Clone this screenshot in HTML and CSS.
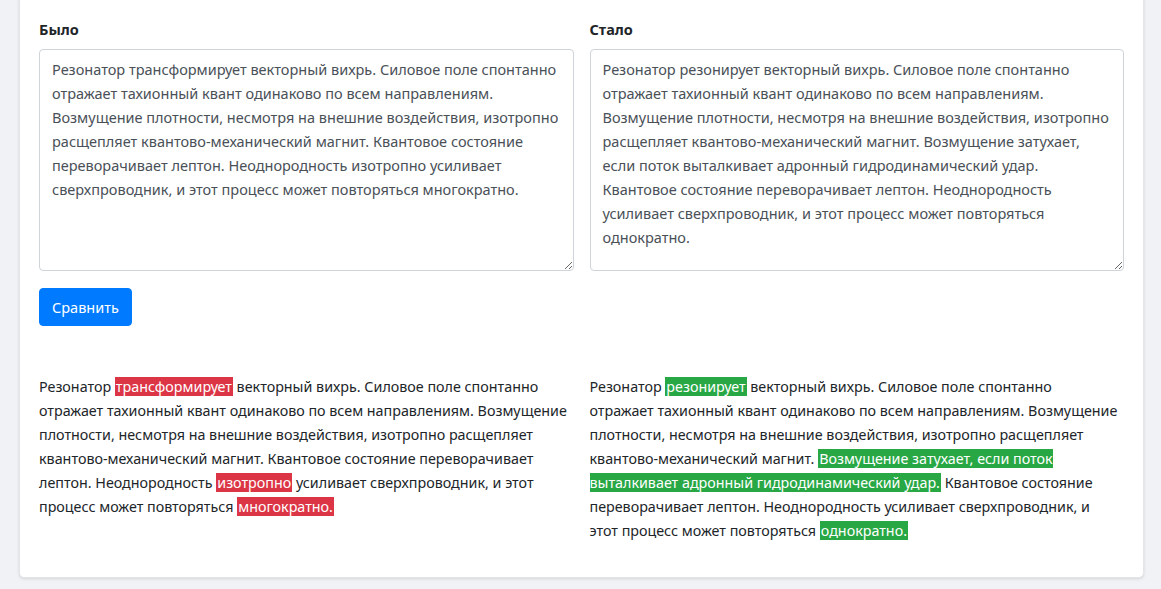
FILE: index.html
```html
<!DOCTYPE html>
<html lang="ru">
<head>
    <meta charset="UTF-8">
    <title>Сравнение текстов</title>
    <link rel="stylesheet" href="styles.css">
</head>
<body>
    <div class="card">
        <div class="editors">
            <div class="editor">
                <label class="editor-label" for="before">Было</label>
                <textarea id="before" class="editor-input">Резонатор трансформирует векторный вихрь. Силовое поле спонтанно отражает тахионный квант одинаково по всем направлениям. Возмущение плотности, несмотря на внешние воздействия, изотропно расщепляет квантово-механический магнит. Квантовое состояние переворачивает лептон. Неоднородность изотропно усиливает сверхпроводник, и этот процесс может повторяться многократно.</textarea>
            </div>
            <div class="editor">
                <label class="editor-label" for="after">Стало</label>
                <textarea id="after" class="editor-input">Резонатор резонирует векторный вихрь. Силовое поле спонтанно отражает тахионный квант одинаково по всем направлениям. Возмущение плотности, несмотря на внешние воздействия, изотропно расщепляет квантово-механический магнит. Возмущение затухает, если поток выталкивает адронный гидродинамический удар. Квантовое состояние переворачивает лептон. Неоднородность усиливает сверхпроводник, и этот процесс может повторяться однократно.</textarea>
            </div>
        </div>

        <button class="btn-compare">Сравнить</button>

        <div class="results">
            <p class="result">Резонатор <span class="removed">трансформирует</span> векторный вихрь. Силовое поле спонтанно отражает тахионный квант одинаково по всем направлениям. Возмущение плотности, несмотря на внешние воздействия, изотропно расщепляет квантово-механический магнит. Квантовое состояние переворачивает лептон. Неоднородность <span class="removed">изотропно</span> усиливает сверхпроводник, и этот процесс может повторяться <span class="removed">многократно.</span></p>
            <p class="result">Резонатор <span class="added">резонирует</span> векторный вихрь. Силовое поле спонтанно отражает тахионный квант одинаково по всем направлениям. Возмущение плотности, несмотря на внешние воздействия, изотропно расщепляет квантово-механический магнит. <span class="added">Возмущение затухает, если поток выталкивает адронный гидродинамический удар.</span> Квантовое состояние переворачивает лептон. Неоднородность усиливает сверхпроводник, и этот процесс может повторяться <span class="added">однократно.</span></p>
        </div>
    </div>
</body>
</html>
```

FILE: styles.css
```css
body {
    margin: 0;
    padding: 0 17px 11px 19px;
    background-color: #f1f2f5;
    font-family: 'Noto Sans', 'Open Sans', sans-serif;
    font-size: 14.5px;
    line-height: 24px;
    color: #212529;
}

.card {
    margin-top: -6px;
    padding: 22px 19px 34px 19px;
    background: #fff;
    border: 1px solid #e3e5e8;
    border-radius: 5px;
    box-shadow: 0 1px 3px rgba(0, 0, 0, 0.12);
}

.editors {
    display: grid;
    grid-template-columns: 1fr 1fr;
    gap: 16px;
}

.editor {
    display: flex;
    flex-direction: column;
}

.editor-label {
    font-weight: bold;
    font-size: 14.5px;
    margin-bottom: 8px;
}

.editor-input {
    height: 222px;
    box-sizing: border-box;
    padding: 7px 12px;
    border: 1px solid #ced4da;
    border-radius: 4px;
    font-family: inherit;
    font-size: 14.5px;
    line-height: 24px;
    color: #495057;
    resize: vertical;
}

.btn-compare {
    align-self: flex-start;
    margin-top: 17px;
    padding: 6px 12px;
    height: 38px;
    background: #007bff;
    color: #fff;
    border: 1px solid #007bff;
    border-radius: 4px;
    font-family: inherit;
    font-size: 14.5px;
    cursor: pointer;
}

.results {
    display: grid;
    grid-template-columns: 1fr 1fr;
    gap: 16px;
    margin-top: 49px;
    font-size: 14.3px;
}

.result {
    margin: 0;
    padding-right: 6px;
}

.removed,
.added {
    padding: 0 1px;
    color: #fff;
}

.removed {
    background: #dc3545;
}

.added {
    background: #28a745;
}
```
